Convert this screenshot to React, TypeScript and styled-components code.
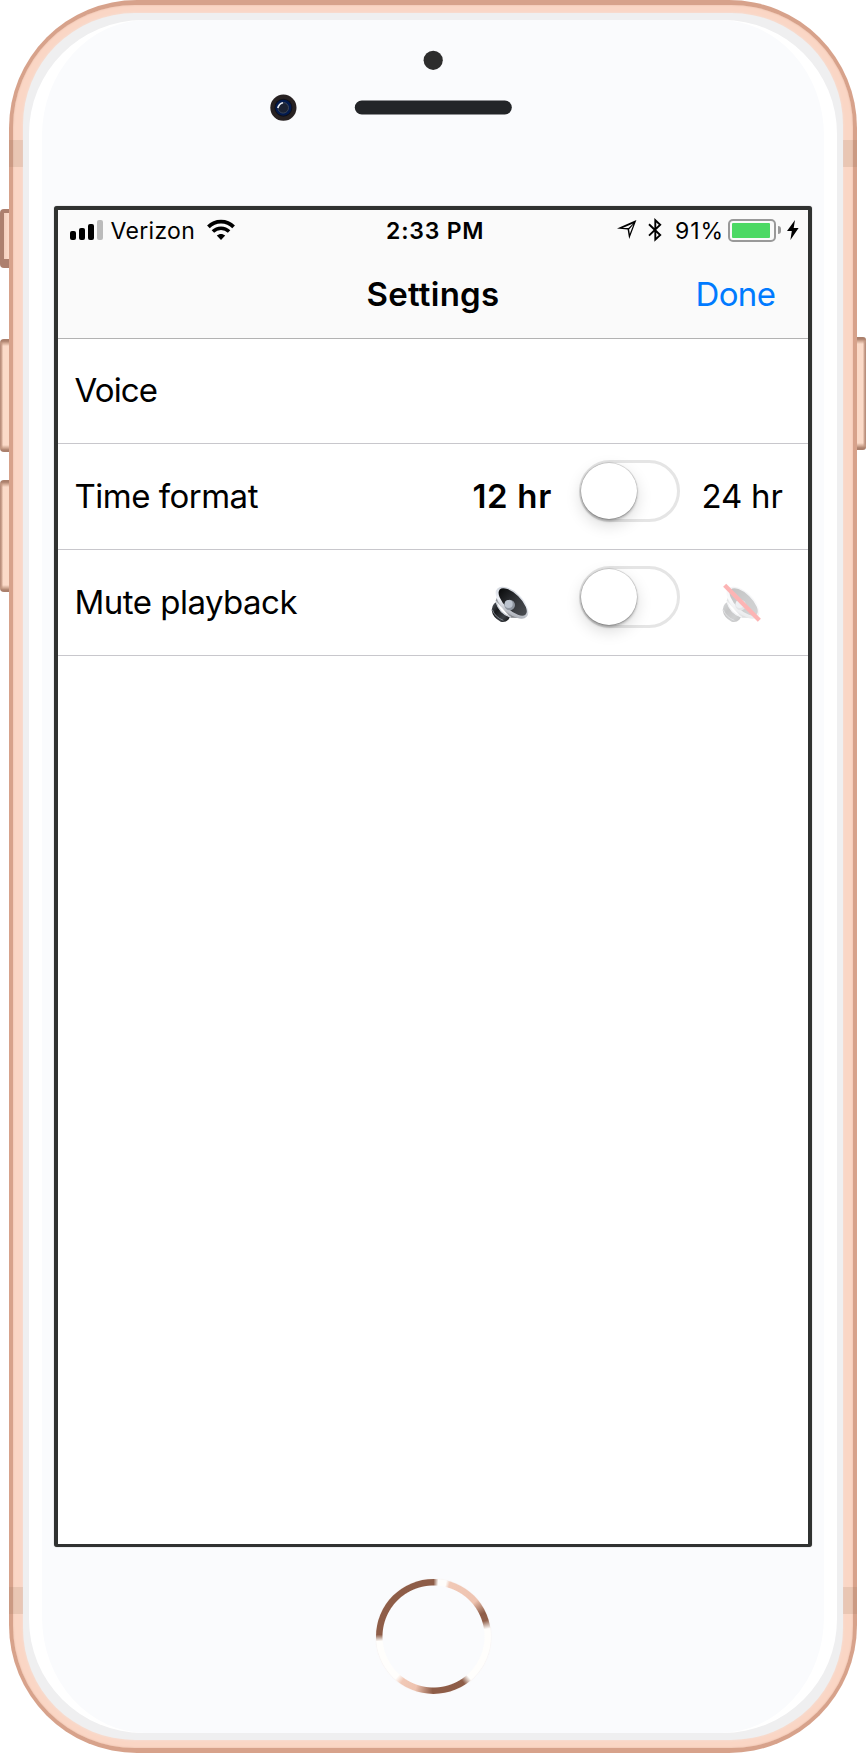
import React from 'react';
import styled, { createGlobalStyle } from 'styled-components';

const GlobalStyle = createGlobalStyle`
  *, *::before, *::after { box-sizing: border-box; }
  body {
    margin: 0;
    background: #fff;
    color: #000;
    font-family: Inter, "Liberation Sans", sans-serif;
  }
  svg { display: block; flex: none; overflow: visible; }
`;

/* ---------- device ---------- */

const Device = styled.div`
  display: flex;
  width: 868px;
  height: 1754px;
`;

const Rail = styled.div<{ $side: 'left' | 'right' }>`
  display: flex;
  flex-direction: column;
  flex: none;
  width: ${(p) => (p.$side === 'left' ? 9 : 11)}px;
`;

const SideButton = styled.div<{ $top: number; $height: number; $side: 'left' | 'right' }>`
  width: 9px;
  height: ${(p) => p.$height}px;
  margin-top: ${(p) => p.$top}px;
  border-radius: ${(p) => (p.$side === 'left' ? '4px 0 0 4px' : '0 3px 3px 0')};
  background: linear-gradient(
      #ab806c 0,
      #ab806c 2px,
      rgba(196, 153, 131, 0.8) 4px,
      rgba(250, 218, 200, 0) 7px,
      rgba(250, 218, 200, 0) calc(100% - 7px),
      rgba(196, 153, 131, 0.8) calc(100% - 4px),
      #ab806c calc(100% - 2px)
    ),
    linear-gradient(
      ${(p) => (p.$side === 'left' ? '90deg' : '270deg')},
      #b08573 0,
      #d4ab97 2px,
      #fbdac8 3px
    );
`;

const MuteSwitch = styled.div`
  width: 9px;
  height: 59px;
  margin-top: 209px;
  padding: 4px 0 9px 4px;
  border-radius: 4px 0 0 4px;
  background: #ad806e;

  &::after {
    content: '';
    display: block;
    height: 100%;
    background: linear-gradient(90deg, #f3cfbd, #fcdccb);
  }
`;

const Shell = styled.div`
  position: relative;
  width: 848px;
  height: 1753px;
  padding: 5px 4px;
  border-radius: 128px;
  background: #d7a28b;
`;

const Metal = styled.div`
  height: 100%;
  padding: 8px 10px;
  border-radius: 122px;
  background: #fad6c5;
  box-shadow: inset 0 0 2px #e6b8a3;
`;

const Bezel = styled.div`
  height: 100%;
  padding: 7px 6px;
  border-radius: 112px;
  background: #efeff0;
  box-shadow: 0 0 3px #f3e3dc;
`;

const Rim = styled.div`
  height: 100%;
  padding: 0 13px;
  border-radius: 114px;
  background: #fff;
`;

const Glass = styled.div`
  display: flex;
  flex-direction: column;
  align-items: center;
  height: 100%;
  border-radius: 105px / 116px;
  background: #fafbfd;
`;

const Antenna = styled.i<{ $side: 'left' | 'right'; $top: number }>`
  position: absolute;
  top: ${(p) => p.$top}px;
  ${(p) => p.$side}: 0;
  width: 14px;
  height: 26.5px;
  background: rgba(150, 120, 95, 0.17);
`;

const Sensors = styled.div`
  flex: none;
  height: 186px;
  padding-top: 25px;
`;

const HomeButton = styled.div`
  flex: none;
  width: 115px;
  height: 115px;
  margin-top: 31.5px;
  border-radius: 50%;
  box-shadow: 0 0 1px rgba(240, 205, 190, 0.55);
  background: radial-gradient(circle, #fafbfd 50.5px, rgba(250, 251, 253, 0) 51.5px),
    conic-gradient(
      #8e5d48 0deg,
      #fefdfb 5deg,
      #fefdfb 13deg,
      #f1c9b7 17deg,
      #eec3b0 50deg,
      #8e5d48 65deg,
      #92614c 73deg,
      #fffefc 82deg,
      #fffefc 139deg,
      #8e5d48 147deg,
      #8e5d48 181deg,
      #eec3b0 199deg,
      #f1c9b7 215deg,
      #fffefc 222deg,
      #fffefc 265deg,
      #8e5d48 272deg,
      #8e5d48 360deg
    );
`;

/* ---------- screen ---------- */

const Screen = styled.div`
  flex: none;
  width: 758px;
  height: 1341px;
  border: solid #303231;
  border-width: 4px 4px 3px;
  border-radius: 3px;
  background: #fff;
  box-shadow: 0 0 1px #777;
`;

const Header = styled.header`
  height: 129px;
  border-bottom: 1px solid #b2b2b2;
  background: #fafafa;
`;

const StatusBar = styled.div`
  display: flex;
  align-items: center;
  height: 40px;
  font-size: 23px;
  line-height: 40px;
`;

const StatusText = styled.span<{ $width: number; $track: number }>`
  flex: none;
  width: ${(p) => p.$width}px;
  padding-top: 2px;
  letter-spacing: ${(p) => p.$track}px;
  white-space: nowrap;
`;

const Clock = styled.time`
  flex: none;
  width: 381.5px;
  padding: 2px 0 0 151px;
  font-weight: 600;
  letter-spacing: 0.8px;
`;

const SignalBars = styled.div`
  display: flex;
  flex: none;
  align-items: flex-end;
  gap: 3px;
  width: 33px;
  height: 20px;
  margin: 0 7.5px 0 12px;
`;

const Bar = styled.i<{ $height: number; $off?: boolean }>`
  width: 6px;
  height: ${(p) => p.$height}px;
  border-radius: 2px;
  background: ${(p) => (p.$off ? '#bbb' : '#000')};
`;

const BluetoothSlot = styled.div`
  flex: none;
  width: 27.5px;
  margin-left: 11px;
`;

const Battery = styled.div`
  display: flex;
  flex: none;
  width: 48px;
  height: 23px;
  margin-left: 4.5px;
  padding: 2px;
  border: 2px solid #999;
  border-radius: 5px;
`;

const Charge = styled.i`
  width: 38px;
  border-radius: 1px;
  background: #4cd964;
`;

const BatteryCap = styled.i`
  flex: none;
  width: 3px;
  height: 8px;
  margin: 0 6px 0 2px;
  border-radius: 0 4px 4px 0;
  background: #999;
`;

const TitleBar = styled.div`
  display: flex;
  align-items: center;
  height: 88px;
  padding-left: 308.5px;
  font-size: 33px;
  line-height: 88px;
`;

const Title = styled.h1`
  flex: none;
  width: 329px;
  margin: 0;
  font-size: inherit;
  font-weight: 600;
  letter-spacing: 0.25px;
`;

const DoneButton = styled.button`
  padding: 0;
  border: 0;
  background: none;
  color: #007aff;
  font: inherit;
  letter-spacing: -0.65px;
`;

const Setting = styled.div<{ $height: number }>`
  display: flex;
  align-items: center;
  height: ${(p) => p.$height}px;
  padding-left: 16.5px;
  border-bottom: 1px solid #c8c7cc;
  font-size: 33px;
  line-height: 40px;
`;

const Name = styled.span<{ $track: number }>`
  flex: none;
  width: 398px;
  padding-bottom: 2px;
  letter-spacing: ${(p) => p.$track}px;
  white-space: nowrap;
`;

const Option = styled.span<{ $width: number; $track: number; $selected?: boolean }>`
  flex: none;
  width: ${(p) => p.$width}px;
  padding-bottom: 2px;
  letter-spacing: ${(p) => p.$track}px;
  font-weight: ${(p) => (p.$selected ? 600 : 400)};
  white-space: nowrap;
`;

const Toggle = styled.button`
  flex: none;
  width: 101px;
  height: 62px;
  margin: 0 22px 11px -1px;
  padding: 0;
  border: 3px solid #e5e5e5;
  border-radius: 31px;
  background: #fff;
`;

const Knob = styled.span`
  display: block;
  width: 56px;
  height: 56px;
  margin-left: -1px;
  border-radius: 50%;
  background: #fff;
  box-shadow: 0 0 1px 0.5px rgba(0, 0, 0, 0.22), 0 2px 3px rgba(0, 0, 0, 0.25),
    0 6px 16px rgba(0, 0, 0, 0.15);
`;

const IconSlot = styled.span<{ $width: number; $indent: number; $faded?: boolean }>`
  flex: none;
  width: ${(p) => p.$width}px;
  padding: 5px 0 0 ${(p) => p.$indent}px;
  opacity: ${(p) => (p.$faded ? 0.3 : 1)};
`;

/* ---------- icons ---------- */

const WifiIcon = () => (
  <svg width="28" height="20" viewBox="0 0 28 20">
    <path d="M1.4 6.9C8.2-.1 19.8-.1 26.6 6.9" fill="none" stroke="#000" strokeWidth="3.7" />
    <path d="M5.9 11.6C10.4 7.1 17.6 7.1 22.1 11.6" fill="none" stroke="#000" strokeWidth="3.5" />
    <path d="M9.8 15.5C12.2 13.4 15.8 13.4 18.2 15.5L14 20Z" />
  </svg>
);

const LocationIcon = () => (
  <svg width="20" height="20" viewBox="0 0 20 20">
    <path
      fillRule="evenodd"
      d="M0 8.6L19.4 0L12.2 19L10.6 9.4ZM5.6 8.1L11.5 8.1L16.2 3.4ZM12.1 9.6L12.8 13.8L16.4 4.6Z"
    />
  </svg>
);

const BluetoothIcon = () => (
  <svg width="14" height="24" viewBox="0 0 14 24">
    <path d="M1 6.2L12.2 17L7.3 21.6V2.2L12.2 6.8L1 17.6" fill="none" stroke="#000" strokeWidth="1.9" />
  </svg>
);

const BoltIcon = () => (
  <svg width="12" height="20" viewBox="0 0 12 20">
    <path d="M8 0L0 11H4.8L3.4 20L11.6 8H6.7Z" />
  </svg>
);

const SpeakerIcon = ({ muted = false }: { muted?: boolean }) => {
  const id = muted ? 'off' : 'on';
  return (
    <svg width="39" height="40" viewBox="0 0 117 120">
      <defs>
        <linearGradient id={`rim-${id}`} x1="0" y1="0" x2="1" y2="1">
          <stop offset="0" stopColor="#c3c8d0" />
          <stop offset=".5" stopColor="#eef1f7" />
          <stop offset="1" stopColor="#8f949c" />
        </linearGradient>
        <linearGradient id={`cone-${id}`} x1="0" y1="0" x2="1" y2="0">
          <stop offset="0" stopColor="#0b0c0d" />
          <stop offset=".55" stopColor="#34373b" />
          <stop offset="1" stopColor="#4a4d51" />
        </linearGradient>
        <linearGradient id={`neck-${id}`} x1="0" y1="0" x2="1" y2="1">
          <stop offset="0" stopColor="#6f7378" />
          <stop offset=".4" stopColor="#d6d9de" />
          <stop offset="1" stopColor="#55585c" />
        </linearGradient>
        <linearGradient id={`magnet-${id}`} x1="0" y1="0" x2="1" y2="1">
          <stop offset="0" stopColor="#5a6068" />
          <stop offset=".35" stopColor="#17191b" />
          <stop offset=".7" stopColor="#3c4045" />
          <stop offset="1" stopColor="#0d0e0f" />
        </linearGradient>
      </defs>
      <g opacity={muted ? 0.8 : 1}>
        <path d="M17 47L62 98L96 98L24 30Z" fill={`url(#neck-${id})`} />
        <path d="M12 56Q6 62 5 76Q8 98 32 110Q46 113 55 104L60 96Q30 88 18 52Z" fill={`url(#magnet-${id})`} />
        <path d="M18 50Q28 86 62 96" fill="none" stroke="#c9ced5" strokeWidth="4" />
        <path d="M7 74Q14 96 40 106" fill="none" stroke="#7d838b" strokeWidth="3" />
        <g transform="translate(66 53) rotate(44)">
          <ellipse rx="61" ry="31" fill={`url(#rim-${id})`} />
          <ellipse cy="-3" rx="54" ry="24" fill={`url(#cone-${id})`} />
        </g>
        <circle cx="59" cy="60" r="16" fill="#8e959f" />
        <circle cx="56" cy="57" r="12" fill="#bcc4cf" />
      </g>
      {muted && <path d="M11 1L115 106" stroke="#f80c0c" strokeWidth="13" />}
    </svg>
  );
};

const SensorArray = () => (
  <svg width="337" height="100" viewBox="265 45 337 100">
    <circle cx="433.2" cy="60.3" r="9.6" fill="#2d2d2d" />
    <rect x="354.8" y="100.5" width="157" height="14" rx="7" fill="#232528" />
    <circle cx="283.4" cy="107.7" r="13.1" fill="#272122" />
    <circle cx="283.4" cy="107.7" r="9" fill="#101018" />
    <circle cx="283.4" cy="107.7" r="8" fill="#021a4e" />
    <circle cx="283.2" cy="107.8" r="5.3" fill="#1b2233" stroke="#3b4558" strokeWidth="1" />
    <path d="M277.8 108Q279 103.8 283 102.8" fill="none" stroke="#e8ecf4" strokeWidth="1.7" />
  </svg>
);

export default function App() {
  return (
    <>
      <GlobalStyle />
      <Device>
        <Rail $side="left">
          <MuteSwitch />
          <SideButton $side="left" $top={71} $height={113} />
          <SideButton $side="left" $top={28} $height={112} />
        </Rail>
        <Shell>
          <Metal>
            <Bezel>
              <Rim>
                <Glass>
                  <Sensors>
                    <SensorArray />
                  </Sensors>
                  <Screen>
                    <Header>
                      <StatusBar>
                        <SignalBars>
                          <Bar $height={9} />
                          <Bar $height={12} />
                          <Bar $height={16} />
                          <Bar $height={20} $off />
                        </SignalBars>
                        <StatusText $width={96.5} $track={0.3}>Verizon</StatusText>
                        <WifiIcon />
                        <Clock>2:33 PM</Clock>
                        <LocationIcon />
                        <BluetoothSlot>
                          <BluetoothIcon />
                        </BluetoothSlot>
                        <StatusText $width={48} $track={0.9}>91%</StatusText>
                        <Battery>
                          <Charge />
                        </Battery>
                        <BatteryCap />
                        <BoltIcon />
                      </StatusBar>
                      <TitleBar>
                        <Title>Settings</Title>
                        <DoneButton>Done</DoneButton>
                      </TitleBar>
                    </Header>
                    <Setting $height={105}>
                      <Name $track={-0.85}>Voice</Name>
                    </Setting>
                    <Setting $height={106}>
                      <Name $track={-0.5}>Time format</Name>
                      <Option $width={107} $track={0.65} $selected>12 hr</Option>
                      <Toggle aria-label="Time format">
                        <Knob />
                      </Toggle>
                      <Option $width={90} $track={-0.2}>24 hr</Option>
                    </Setting>
                    <Setting $height={106}>
                      <Name $track={-0.52}>Mute playback</Name>
                      <IconSlot $width={107} $indent={17.5}>
                        <SpeakerIcon />
                      </IconSlot>
                      <Toggle aria-label="Mute playback">
                        <Knob />
                      </Toggle>
                      <IconSlot $width={70} $indent={19} $faded>
                        <SpeakerIcon muted />
                      </IconSlot>
                    </Setting>
                  </Screen>
                  <HomeButton />
                </Glass>
              </Rim>
            </Bezel>
          </Metal>
          <Antenna $side="left" $top={140} />
          <Antenna $side="right" $top={140} />
          <Antenna $side="left" $top={1587} />
          <Antenna $side="right" $top={1587} />
        </Shell>
        <Rail $side="right">
          <SideButton $side="right" $top={337} $height={113} />
        </Rail>
      </Device>
    </>
  );
}
